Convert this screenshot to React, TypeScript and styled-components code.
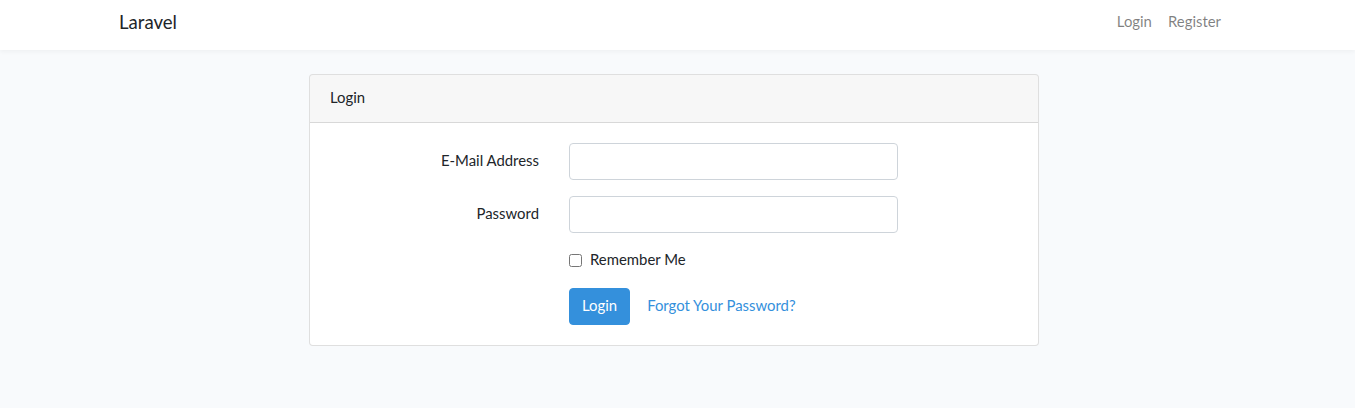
import React from "react";
import styled, { createGlobalStyle } from "styled-components";

const Global = createGlobalStyle`
  html, body { margin: 0; padding: 0; }
  body {
    background: #f8fafc;
    font-family: "Lato", "Noto Sans", sans-serif;
    font-size: 14.9px;
    line-height: 1.6;
    color: #212529;
  }
  * { box-sizing: border-box; }
`;

const Navbar = styled.nav`
  background: #fff;
  box-shadow: 0 2px 4px rgba(0, 0, 0, 0.04);
  height: 50px;
`;

const Container = styled.div`
  width: 1140px;
  margin-left: calc(50% - 573.5px);
  padding: 0 15px;
`;

const NavInner = styled(Container)`
  height: 100%;
  display: flex;
  align-items: center;
  justify-content: space-between;
`;

const Brand = styled.a`
  font-size: 18.6px;
  color: #212529;
  text-decoration: none;
  line-height: 1;
  margin-top: -6px;
`;

const NavLinks = styled.div`
  display: flex;
  margin-top: -7px;
`;

const NavLink = styled.a`
  color: rgba(0, 0, 0, 0.5);
  text-decoration: none;
  padding: 0 8px;
`;

const Main = styled.main`
  padding: 24px 0;
`;

const Card = styled.div`
  width: 730px;
  margin-left: 190px;
  background: #fff;
  border: 1px solid rgba(0, 0, 0, 0.125);
  border-radius: 4px;
  overflow: hidden;
`;

const CardHeader = styled.div`
  padding: 11px 20px 13px;
  background: rgba(0, 0, 0, 0.03);
  border-bottom: 1px solid rgba(0, 0, 0, 0.125);
  line-height: 23px;
`;

const CardBody = styled.div`
  padding: 20px;
`;

const FormRow = styled.div<{ $last?: boolean }>`
  display: flex;
  gap: 30px;
  margin-bottom: ${(p) => (p.$last ? "0" : "16px")};
`;

const Label = styled.label`
  width: 209px;
  text-align: right;
  padding-top: 6px;
  line-height: 23px;
`;

const Field = styled.div<{ $offset?: boolean }>`
  width: 329px;
  margin-left: ${(p) => (p.$offset ? "239px" : "0")};
  display: flex;
  align-items: center;
`;

const Input = styled.input`
  width: 100%;
  height: 37px;
  border: 1px solid #ced4da;
  border-radius: 4px;
  padding: 6px 12px;
  font: inherit;
  background: #fff;
`;

const Check = styled.label`
  display: flex;
  align-items: center;
  line-height: 23px;
  margin-top: -1px;
  padding-bottom: 1px;
`;

const CheckBox = styled.input`
  width: 13px;
  height: 13px;
  margin: 1px 8px 0 0;
`;

const Button = styled.button`
  background: #3490dc;
  color: #fff;
  border: 1px solid #3490dc;
  border-radius: 4px;
  padding: 5px 12px 7px;
  font: inherit;
  line-height: 23px;
  height: 37px;
`;

const LinkButton = styled.a`
  color: #3490dc;
  text-decoration: none;
  padding: 5px 12px 7px;
  margin-left: 5px;
  line-height: 23px;
`;

export default function App() {
  return (
    <>
      <Global />
      <Navbar>
        <NavInner>
          <Brand href="#">Laravel</Brand>
          <NavLinks>
            <NavLink href="#">Login</NavLink>
            <NavLink href="#">Register</NavLink>
          </NavLinks>
        </NavInner>
      </Navbar>
      <Main>
        <Container>
          <Card>
            <CardHeader>Login</CardHeader>
            <CardBody>
              <FormRow>
                <Label>E-Mail Address</Label>
                <Field>
                  <Input type="email" />
                </Field>
              </FormRow>
              <FormRow>
                <Label>Password</Label>
                <Field>
                  <Input type="password" />
                </Field>
              </FormRow>
              <FormRow>
                <Field $offset>
                  <Check>
                    <CheckBox type="checkbox" />
                    Remember Me
                  </Check>
                </Field>
              </FormRow>
              <FormRow $last>
                <Field $offset>
                  <Button>Login</Button>
                  <LinkButton href="#">Forgot Your Password?</LinkButton>
                </Field>
              </FormRow>
            </CardBody>
          </Card>
        </Container>
      </Main>
    </>
  );
}
